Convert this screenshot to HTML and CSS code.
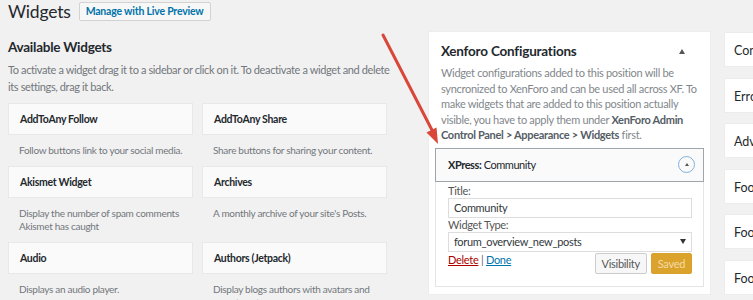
FILE: index.html
```html
<!DOCTYPE html>
<html>
<head>
<meta charset="utf-8">
<link rel="stylesheet" href="styles.css">
</head>
<body>
<div class="page">
  <header class="top">
    <h1 class="title">Widgets</h1>
    <a class="btn-preview">Manage with Live Preview</a>
  </header>
  <div class="cols">
    <section class="available">
      <h2 class="avail-h">Available Widgets</h2>
      <p class="intro">To activate a widget drag it to a sidebar or click on it. To deactivate a widget and delete its settings, drag it back.</p>
      <div class="grid">
        <div class="widget"><div class="w-title">AddToAny Follow</div><div class="w-desc">Follow buttons link to your social media.</div></div>
        <div class="widget"><div class="w-title">AddToAny Share</div><div class="w-desc">Share buttons for sharing your content.</div></div>
        <div class="widget"><div class="w-title">Akismet Widget</div><div class="w-desc">Display the number of spam comments Akismet has caught</div></div>
        <div class="widget"><div class="w-title">Archives</div><div class="w-desc">A monthly archive of your site's Posts.</div></div>
        <div class="widget"><div class="w-title">Audio</div><div class="w-desc">Displays an audio player.</div></div>
        <div class="widget"><div class="w-title">Authors (Jetpack)</div><div class="w-desc">Display blogs authors with avatars and recent posts.</div></div>
      </div>
    </section>

    <section class="panel">
      <div class="panel-head">
        <h2 class="panel-h">Xenforo Configurations</h2>
        <span class="caret"></span>
      </div>
      <p class="panel-desc">Widget configurations added to this position will be syncronized to XenForo and can be used all across XF. To make widgets that are added to this position actually visible, you have to apply them under <b>XenForo Admin Control Panel &gt; Appearance &gt; Widgets</b> first.</p>
      <div class="iw">
        <div class="iw-head">
          <span class="iw-title"><b>XPress:</b> Community</span>
          <span class="toggle"><span class="tri"></span></span>
        </div>
        <div class="iw-body">
          <label class="lbl">Title:</label>
          <div class="field">Community</div>
          <label class="lbl">Widget Type:</label>
          <div class="field select"><span>forum_overview_new_posts</span><span class="sel-arrow"></span></div>
          <div class="actions">
            <div class="links"><a class="del">Delete</a> <span class="sep">|</span> <a class="done">Done</a></div>
            <div class="btns"><span class="btn vis">Visibility</span><span class="btn saved">Saved</span></div>
          </div>
        </div>
      </div>
    </section>

    <section class="sidebars">
      <div class="sb">Content Sidebar</div>
      <div class="sb">Error Page</div>
      <div class="sb">Advertising</div>
      <div class="sb">Footer 1</div>
      <div class="sb">Footer 2</div>
      <div class="sb">Footer 3</div>
    </section>
  </div>

  <svg class="arrow" width="70" height="130" viewBox="0 0 70 130">
    <line x1="3" y1="3" x2="54" y2="102" stroke="#d9473a" stroke-width="3" stroke-linecap="round"/>
    <polygon points="58,112 56.5,95.5 46.5,100.5" fill="#d9473a"/>
  </svg>
</div>
</body>
</html>
```

FILE: styles.css
```css
* { box-sizing: border-box; }
html, body { margin: 0; padding: 0; }
body {
  background: #f1f1f1;
  font-family: "Lato", "Open Sans", sans-serif;
  color: #23282d;
  width: 753px;
  height: 300px;
  overflow: hidden;
}
.page { position: relative; width: 753px; height: 300px; overflow: hidden; }

.top {
  display: flex;
  align-items: center;
  gap: 8px;
  padding: 1px 0 0 8px;
  height: 22px;
}
.title {
  margin: 0;
  font-size: 17.5px;
  font-weight: 400;
  line-height: 24px;
  letter-spacing: -0.2px;
}
.btn-preview {
  border: 1px solid #d2d2d2;
  background: #f7f7f7;
  color: #0073aa;
  font-size: 10.5px;
  font-weight: 700;
  letter-spacing: -0.2px;
  height: 19px;
  line-height: 17px;
  padding: 0 6px;
  border-radius: 2px;
}

.cols {
  display: flex;
  align-items: flex-start;
  padding-left: 8px;
  margin-top: 9px;
}
.available { width: 378px; flex: none; padding-top: 7px; }
.avail-h {
  margin: 0;
  font-size: 13.5px;
  font-weight: 700;
  letter-spacing: -0.25px;
  line-height: 18px;
}
.intro {
  margin: 5px -4px 0 0;
  font-size: 11px;
  letter-spacing: -0.38px;
  line-height: 17px;
  color: #72777c;
}
.grid {
  display: grid;
  grid-template-columns: 185px 185px;
  column-gap: 9px;
  margin-top: 8px;
}
.w-title {
  background: #fafafa;
  border: 1px solid #e8e8e8;
  height: 32px;
  line-height: 30px;
  padding-left: 11px;
  font-size: 10.5px;
  font-weight: 700;
  letter-spacing: -0.3px;
}
.w-desc {
  padding: 9px 8px 9px 11px;
  font-size: 10px;
  letter-spacing: -0.3px;
  line-height: 13px;
  color: #72777c;
}

.panel {
  width: 283px;
  flex: none;
  margin-left: 42px;
  background: #fff;
  border: 1px solid #ededed;
  padding: 0 6px 7px;
}
.panel-head {
  display: flex;
  justify-content: space-between;
  align-items: center;
  padding: 9px 19px 0 6px;
  height: 29px;
}
.panel-h { margin: 0; font-size: 13.5px; font-weight: 700; letter-spacing: -0.2px; line-height: 18px; }
.caret {
  width: 0; height: 0;
  border-left: 3.5px solid transparent;
  border-right: 3.5px solid transparent;
  border-bottom: 5px solid #555;
}
.panel-desc {
  margin: 4px 0 0;
  padding: 0 6px;
  font-size: 11px;
  letter-spacing: -0.3px;
  line-height: 15.5px;
  color: #82878c;
}
.panel-desc b { color: #555d66; font-weight: 700; }

.iw { margin-top: 5px; }
.iw-head {
  display: flex;
  justify-content: space-between;
  align-items: center;
  height: 34px;
  border: 1px solid #a0a5aa;
  background: #fafafa;
  padding: 0 8px 0 12px;
  font-size: 11px;
  letter-spacing: -0.45px;
}
.iw-title b { font-weight: 700; }
.toggle {
  width: 17px; height: 17px;
  border: 1px solid #7fb1d9;
  border-radius: 50%;
  display: flex;
  align-items: center;
  justify-content: center;
}
.tri {
  width: 0; height: 0;
  border-left: 2.5px solid transparent;
  border-right: 2.5px solid transparent;
  border-bottom: 3.5px solid #555;
}
.iw-body {
  border: 1px solid #e5e5e5;
  border-top: none;
  padding: 2px 11px 12px 12px;
  font-size: 11px;
  letter-spacing: -0.3px;
}
.lbl { display: block; line-height: 14px; color: #555; }
.field {
  border: 1px solid #ddd;
  height: 20px;
  line-height: 18px;
  padding: 0 5px;
  font-size: 11px;
  color: #32373c;
}
.select { display: flex; justify-content: space-between; align-items: center; }
.sel-arrow {
  width: 0; height: 0;
  border-left: 3px solid transparent;
  border-right: 3px solid transparent;
  border-top: 5px solid #333;
}
.actions { display: flex; justify-content: space-between; align-items: flex-start; }
.links { line-height: 14px; margin-top: 1px; }
.del { color: #a00; text-decoration: underline; }
.done { color: #0073aa; text-decoration: underline; }
.sep { color: #666; }
.btns { display: flex; gap: 4px; margin-top: 1px; }
.btn {
  height: 21px;
  line-height: 19px;
  border-radius: 2px;
  font-size: 11px;
  padding: 0 6px;
}
.vis { border: 1px solid #ccc; background: #f7f7f7; color: #555; }
.saved { border: 1px solid #d9a12a; background: #dba22c; color: #f3dca5; }

.sidebars {
  flex: none;
  margin-left: 13px;
  margin-top: 1px;
  display: flex;
  flex-direction: column;
  gap: 10.5px;
}
.sb {
  width: 200px;
  height: 35px;
  line-height: 35px;
  background: #fff;
  border: 1px solid #ececec;
  padding-left: 9px;
  font-size: 12.5px;
  font-weight: 400;
  white-space: nowrap;
}

.arrow { position: absolute; left: 380px; top: 32px; }
```
